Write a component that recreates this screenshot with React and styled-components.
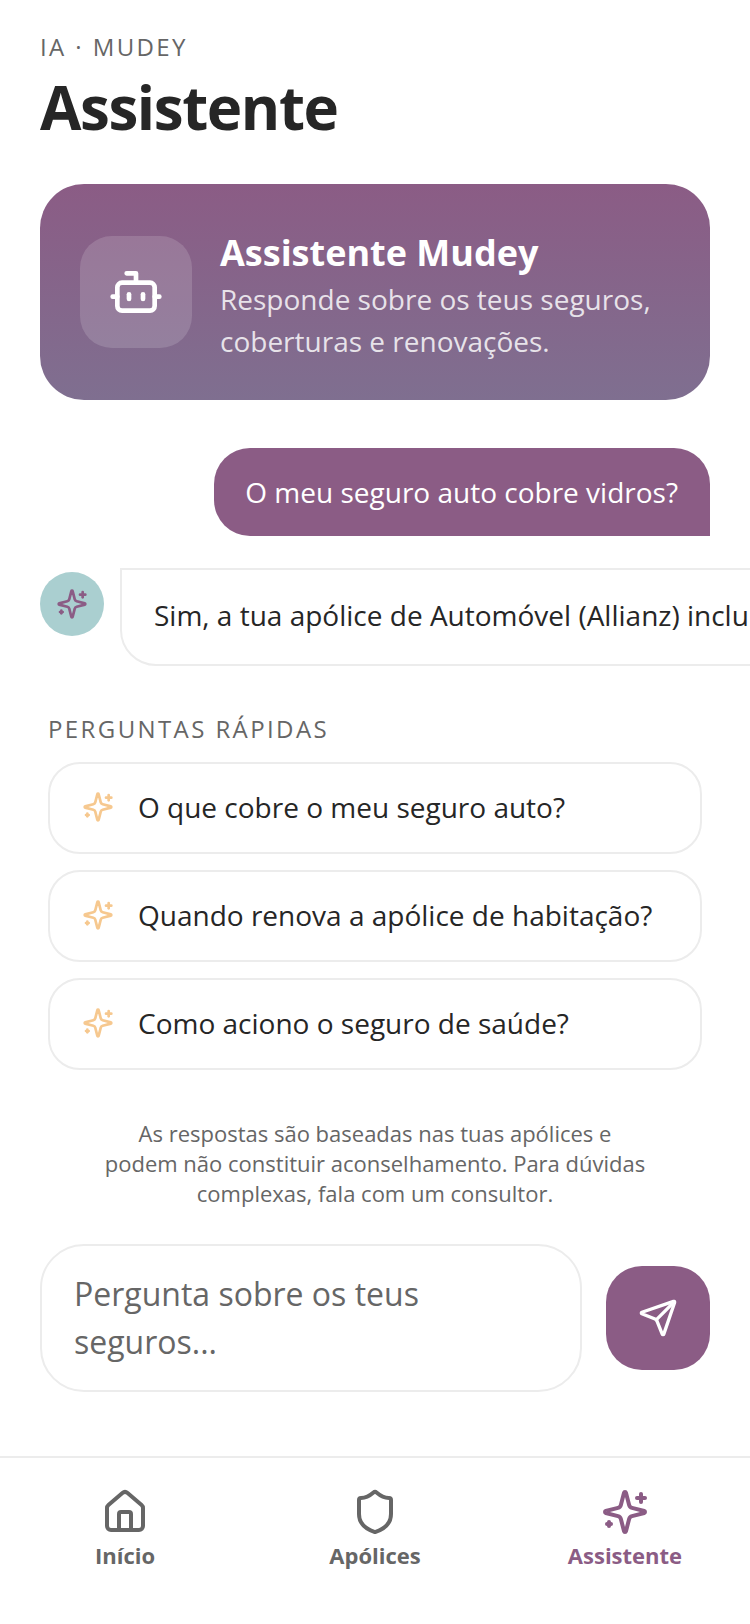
import React from "react";
import styled, { createGlobalStyle } from "styled-components";
import { Bot, House, Send, Shield } from "lucide-react";

const plum = "#8b5c85";
const line = "#ececec";
const grey = "#666666";
const ink = "#262626";

const GlobalStyle = createGlobalStyle`
  html, body {
    margin: 0;
    padding: 0;
    background: #ffffff;
  }
  body {
    font-family: "Open Sans", "Liberation Sans", sans-serif;
    color: ${ink};
  }
  * {
    box-sizing: border-box;
  }
`;

const Page = styled.div`
  width: 750px;
  height: 1624px;
  display: flex;
  flex-direction: column;
  overflow: hidden;
  background: #ffffff;
`;

const Main = styled.main`
  flex: 1;
  display: flex;
  flex-direction: column;
  padding: 32px 40px 0;
  min-height: 0;
`;

const Eyebrow = styled.div`
  font-size: 24px;
  line-height: 30px;
  letter-spacing: 2.4px;
  color: ${grey};
`;

const Title = styled.h1`
  margin: 7px 0 0;
  font-size: 60px;
  line-height: 76px;
  font-weight: 700;
  letter-spacing: -1.4px;
  color: ${ink};
`;

const Hero = styled.section`
  margin-top: 39px;
  height: 216px;
  display: flex;
  align-items: center;
  gap: 28px;
  padding: 0 40px;
  border-radius: 44px;
  background: linear-gradient(180deg, #8b5c85 0%, #7f6f90 100%);
  color: #ffffff;
`;

const HeroIcon = styled.div`
  width: 112px;
  height: 112px;
  flex: none;
  display: flex;
  align-items: center;
  justify-content: center;
  border-radius: 32px;
  background: rgba(255, 255, 255, 0.15);
`;

const HeroText = styled.div`
  display: flex;
  flex-direction: column;
  padding-top: 6px;
`;

const HeroTitle = styled.div`
  font-size: 36px;
  line-height: 48px;
  font-weight: 700;
  margin-bottom: 1px;
`;

const HeroSub = styled.div`
  font-size: 28px;
  line-height: 42px;
  color: rgba(255, 255, 255, 0.82);
`;

const UserBubble = styled.div`
  align-self: flex-end;
  margin-top: 48px;
  padding: 23px 32px 23px 31px;
  font-size: 28px;
  line-height: 42px;
  color: #ffffff;
  background: ${plum};
  border-radius: 36px 36px 0 36px;
`;

const BotRow = styled.div`
  margin-top: 32px;
  margin-right: -40px;
  display: flex;
  align-items: flex-start;
  gap: 16px;
`;

const Avatar = styled.div`
  width: 64px;
  height: 64px;
  margin-top: 4px;
  flex: none;
  display: flex;
  align-items: center;
  justify-content: center;
  border-radius: 50%;
  background: #aacfd0;
`;

const BotBubble = styled.div`
  flex: 1;
  min-width: 0;
  margin-right: -200px;
  padding: 24px 32px 28px;
  font-size: 28px;
  line-height: 42px;
  white-space: nowrap;
  overflow: hidden;
  color: ${ink};
  background: #ffffff;
  border: 2px solid ${line};
  border-radius: 0 36px 36px 36px;
`;

const Quick = styled.section`
  margin-top: 48px;
  padding: 0 8px;
  display: flex;
  flex-direction: column;
  gap: 16px;
`;

const QuickLabel = styled.div`
  font-size: 24px;
  line-height: 30px;
  letter-spacing: 2.4px;
  color: ${grey};
  margin-bottom: 2px;
`;

const QuickButton = styled.button`
  height: 92px;
  display: flex;
  align-items: center;
  gap: 24px;
  padding: 0 32px 3px;
  font-family: inherit;
  font-size: 28px;
  color: ${ink};
  text-align: left;
  background: #ffffff;
  border: 2px solid ${line};
  border-radius: 32px;
`;

const Note = styled.p`
  margin: 48px auto 0;
  width: 546px;
  font-size: 22px;
  line-height: 30px;
  text-align: center;
  color: ${grey};
`;

const Composer = styled.div`
  margin-top: 36px;
  display: flex;
  align-items: center;
  gap: 24px;
`;

const Field = styled.div`
  flex: 1;
  height: 148px;
  padding: 24px 32px;
  font-size: 32px;
  line-height: 48px;
  color: ${grey};
  background: #ffffff;
  border: 2px solid ${line};
  border-radius: 44px;
`;

const SendButton = styled.button`
  width: 104px;
  height: 104px;
  flex: none;
  display: flex;
  align-items: center;
  justify-content: center;
  border: 0;
  border-radius: 36px;
  background: ${plum};
`;

const Nav = styled.nav`
  height: 168px;
  display: grid;
  grid-template-columns: repeat(3, 1fr);
  padding-top: 30px;
  border-top: 2px solid ${line};
  background: #ffffff;
`;

const NavItem = styled.div`
  display: flex;
  flex-direction: column;
  align-items: center;
  gap: 4px;
  font-size: 22px;
  line-height: 30px;
  font-weight: 700;
  color: ${(props) => (props.$active ? plum : grey)};
`;

// the lucide sparkles with the small plus at the bottom left, not the circle
function SparkleIcon({ size = 24, color = "currentColor" }) {
  return (
    <svg
      width={size}
      height={size}
      viewBox="0 0 24 24"
      fill="none"
      stroke={color}
      strokeWidth="2"
      strokeLinecap="round"
      strokeLinejoin="round"
    >
      <path d="M9.937 15.5A2 2 0 0 0 8.5 14.063l-6.135-1.582a.5.5 0 0 1 0-.962L8.5 9.936A2 2 0 0 0 9.937 8.5l1.582-6.135a.5.5 0 0 1 .963 0L14.063 8.5A2 2 0 0 0 15.5 9.937l6.135 1.581a.5.5 0 0 1 0 .964L15.5 14.063a2 2 0 0 0-1.437 1.437l-1.582 6.135a.5.5 0 0 1-.963 0z" />
      <path d="M20 3v4" />
      <path d="M22 5h-4" />
      <path d="M4 17v2" />
      <path d="M5 18H3" />
    </svg>
  );
}

const questions = [
  "O que cobre o meu seguro auto?",
  "Quando renova a apólice de habitação?",
  "Como aciono o seguro de saúde?",
];

const navItems = [
  { label: "Início", Icon: House },
  { label: "Apólices", Icon: Shield },
  { label: "Assistente", Icon: SparkleIcon, active: true },
];

export default function App() {
  return (
    <Page>
      <GlobalStyle />
      <Main>
        <Eyebrow>IA · MUDEY</Eyebrow>
        <Title>Assistente</Title>

        <Hero>
          <HeroIcon>
            <Bot size={56} color="#ffffff" strokeWidth={2} />
          </HeroIcon>
          <HeroText>
            <HeroTitle>Assistente Mudey</HeroTitle>
            <HeroSub>
              Responde sobre os teus seguros,
              <br />
              coberturas e renovações.
            </HeroSub>
          </HeroText>
        </Hero>

        <UserBubble>O meu seguro auto cobre vidros?</UserBubble>

        <BotRow>
          <Avatar>
            <SparkleIcon size={32} color={plum} />
          </Avatar>
          <BotBubble>
            Sim, a tua apólice de Automóvel (Allianz) inclui cobertura de vidros.
          </BotBubble>
        </BotRow>

        <Quick>
          <QuickLabel>PERGUNTAS RÁPIDAS</QuickLabel>
          {questions.map((q) => (
            <QuickButton key={q}>
              <SparkleIcon size={32} color="#f6c88f" />
              {q}
            </QuickButton>
          ))}
        </Quick>

        <Note>
          As respostas são baseadas nas tuas apólices e podem não constituir
          aconselhamento. Para dúvidas complexas, fala com um consultor.
        </Note>

        <Composer>
          <Field>
            Pergunta sobre os teus
            <br />
            seguros...
          </Field>
          <SendButton>
            <Send size={40} color="#ffffff" strokeWidth={2} />
          </SendButton>
        </Composer>
      </Main>

      <Nav>
        {navItems.map(({ label, Icon, active }) => (
          <NavItem key={label} $active={active}>
            <Icon size={48} strokeWidth={2} />
            {label}
          </NavItem>
        ))}
      </Nav>
    </Page>
  );
}
